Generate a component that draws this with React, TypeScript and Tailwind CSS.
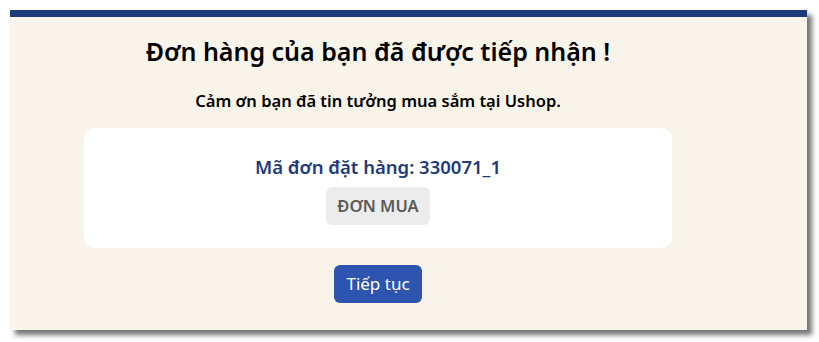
export default function App() {
  return (
    <div className="w-[819px] h-[342px] bg-white pt-[10px] pl-[10px]">
      <div
        className="w-[797px] h-[320px] bg-[#f8f4ea] shadow-[5px_5px_5px_rgba(0,0,0,0.55)] flex flex-col"
        style={{ fontFamily: '"Noto Sans", Lato, sans-serif' }}
      >
        <div className="h-[7px] bg-[#1f3a7a]" />
        <div className="w-[588px] ml-[74px] flex flex-col items-center">
          <h1 className="mt-[18px] text-[25px] leading-[32px] font-semibold text-black">
            Đơn hàng của bạn đã được tiếp nhận !
          </h1>
          <p className="mt-[23px] text-[16.5px] leading-[22px] font-semibold text-black">
            Cảm ơn bạn đã tin tưởng mua sắm tại Ushop.
          </p>
          <div className="mt-[16px] w-full h-[120px] bg-white rounded-[10px] flex flex-col items-center pt-[26px]">
            <div className="text-[18.5px] leading-[26px] font-semibold text-[#1e3a7b]">
              Mã đơn đặt hàng: 330071_1
            </div>
            <button className="mt-[7px] h-[38px] px-[11px] rounded-[6px] bg-[#ececec] text-[#5a5a5a] text-[16.5px] font-semibold">
              ĐƠN MUA
            </button>
          </div>
          <button className="mt-[17px] h-[38px] px-[12px] rounded-[6px] bg-[#2d55b0] text-white text-[17px]">
            Tiếp tục
          </button>
        </div>
      </div>
    </div>
  );
}
